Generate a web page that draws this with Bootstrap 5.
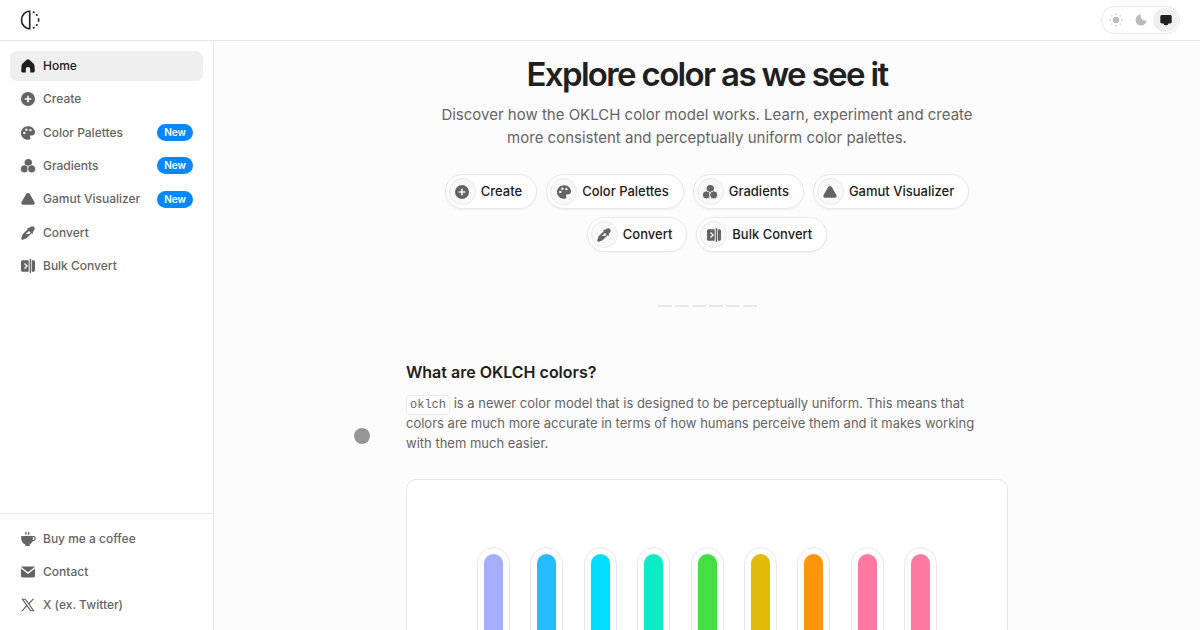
<!DOCTYPE html>
<html lang="en">
<head>
<meta charset="utf-8">
<meta name="viewport" content="width=device-width, initial-scale=1">
<title>OKLCH colors</title>
<link href="https://cdn.jsdelivr.net/npm/bootstrap@5.3.0/dist/css/bootstrap.min.css" rel="stylesheet">
<style>
  body { font-family: Inter, "Liberation Sans", sans-serif; font-size: 13px; color: #202020; background: #fcfcfc; }
  a { text-decoration: none; }
  .line { border-color: #e8e8e8 !important; }
  .icon { width: 16px; height: 16px; fill: currentColor; flex: none; }
  .topbar { height: 41px; padding: 0 20px; }
  .brand-mark { width: 20px; height: 20px; }
  .themes { padding: 1px; height: 28px; }
  .themes label { width: 25px; height: 24px; color: #bbb; }
  .themes .btn-check:checked + label { background: #efefef; color: #202020; }
  .themes .icon { width: 14px; height: 14px; }
  .sidebar { width: 214px; }
  .side-list { padding: 10px; }
  .side-main { height: 250px; }
  .side-foot { height: 117px; }
  .side-link { height: 30px; padding: 0 10px; gap: 7px; border-radius: 7px; color: #646464; font-size: 12px; font-weight: 500; }
  .side-link.active { background: #efefef; color: #202020; }
  .new-tag { background: #0588ff; color: #fff; font-size: 10px; line-height: 17px; font-weight: 600; padding: 0 7px; }
  .page { overflow-y: auto; scrollbar-width: none; }
  .hero { width: 100%; max-width: 540px; padding-top: 13px; }
  .hero h1 { font-size: 33px; line-height: 40px; font-weight: 600; letter-spacing: -0.05em; margin: 0 0 9px; }
  .hero p { font-size: 15px; line-height: 23px; color: #646464; margin: 0 0 25px; }
  .pills { gap: 8px 9px; }
  .pill { height: 35px; padding: 0 14px 0 3px; gap: 5px; font-size: 13px; font-weight: 500; color: #202020; background: #fff; box-shadow: 0 1px 2px #0000000d; }
  .pill-icon { width: 27px; height: 27px; background: #f9f9f9; color: #646464; }
  .dashes { gap: 3px; margin: 53px 0 54px; }
  .dashes span { width: 14px; height: 2px; background: #e8e8e8; }
  .article { width: 100%; max-width: 602px; }
  .article h2 { font-size: 16px; line-height: 22px; font-weight: 600; margin: 0 0 10px; }
  .article p { font-size: 13px; line-height: 20px; color: #646464; margin: 0 0 26px; padding-right: 14px; }
  .article code { font-family: "Liberation Mono", monospace; font-size: 12px; line-height: 16px; color: #646464; background: #fff; padding: 2px 3px; border-radius: 4px; }
  .chart { border-radius: 10px; padding: 67px 70px; }
  .tube { width: 33px; height: 200px; padding: 6px; }
  .dot { position: fixed; left: 354px; top: 428px; width: 16px; height: 16px; background: #969696; }
</style>
</head>
<body class="vh-100 d-flex flex-column overflow-hidden">
<svg class="d-none">
  <symbol id="home" viewBox="0 0 16 16"><path d="M8 1.200c.5 0 1 .2 1.400.6l4 3.800c.6.6.9 1.200 1 2l.4 4.700c.1 1.400-.7 2.300-1.900 2.300h-2.700V11.200c0-1.300-.9-2.100-2.200-2.100s-2.200.8-2.200 2.100v3.400H3.100c-1.200 0-2-.9-1.900-2.300l.4-4.700c.1-.8.4-1.400 1-2l4-3.800c.4-.4.9-.6 1.400-.6z"/></symbol>
  <symbol id="plus" viewBox="0 0 16 16"><path fill-rule="evenodd" d="M8 1a7 7 0 1 1 0 14A7 7 0 0 1 8 1zm-.8 3.700v2.500H4.700v1.600h2.500v2.500h1.600V8.800h2.500V7.200H8.800V4.700z"/></symbol>
  <symbol id="palette" viewBox="0 0 16 16"><path fill-rule="evenodd" d="M8 1.200c4 0 7 2.700 7 6 0 2.100-1.400 3.200-3.200 3.200h-1c-.8 0-1.100.7-.7 1.400.9 1.400.2 3-1.500 3C4 14.800 1 11.900 1 8s3.100-6.800 7-6.800zM4.300 6.700a1.200 1.200 0 1 0 0 2.400 1.200 1.200 0 0 0 0-2.400zM6.400 3.500a1.200 1.200 0 1 0 0 2.400 1.200 1.200 0 0 0 0-2.400zm4 .4a1.200 1.200 0 1 0 0 2.400 1.200 1.200 0 0 0 0-2.400z"/></symbol>
  <symbol id="circles" viewBox="0 0 16 16"><circle cx="8.300" cy="4.700" r="3.700"/><circle cx="4.400" cy="10.900" r="4" stroke="#fff" stroke-width=".8"/><circle cx="11.700" cy="10.900" r="4" stroke="#fff" stroke-width=".8"/></symbol>
  <symbol id="triangle" viewBox="0 0 16 16"><path d="M6 3.200c.9-1.500 3.100-1.500 4 0l4.400 7.900c.8 1.400 0 2.600-1.600 2.600H3.200c-1.600 0-2.400-1.200-1.600-2.600z"/></symbol>
  <symbol id="dropper" viewBox="0 0 16 16"><path fill-rule="evenodd" d="M10 2.300c1.200-1.200 2.800-1.500 4-.4s.8 2.800-.4 4l-1 1 .3.300c.8.8-.4 2-1.200 1.200l-.1-.1-4.500 4.500c-.6.6-1.100.9-1.800 1l-.9.200-.9.600c-1.400.8-2.900-.6-2.100-2l.6-1 .2-1c.1-.7.400-1.200 1-1.800l4.500-4.500-.1-.1c-.8-.8.400-2 1.200-1.200zm-1.100 3.600L5.900 8.900h3.200l1.500-1.500z"/></symbol>
  <symbol id="bulk" viewBox="0 0 16 16"><path fill-rule="evenodd" d="M2.800 2.200h5.900v11.600H2.800C1.600 13.800 1 13.200 1 12V4c0-1.200.6-1.800 1.800-1.800zm1.200 3.700L6.100 8 4 10.100l1 .9 3-3-3-3z"/><path d="M9.700 1H11v14H9.700zM11.700 2.200h1.500c1.200 0 1.800.6 1.800 1.800v8c0 1.200-.6 1.800-1.800 1.800h-1.500z"/></symbol>
  <symbol id="coffee" viewBox="0 0 16 16"><path d="M5.200.8h1.300v3H5.200zM8 .8h1.300v3H8z"/><path fill-rule="evenodd" d="M1.200 5h12.300c1.500 0 2.300.9 2.300 2.300 0 2-1.400 3.200-3.400 3.200-.6 1.300-1.500 2.300-2.700 2.900V15H5.300v-1.600C2.600 12.500 1.200 10 1.200 7zm11.600 1.300v2.900c1.100-.1 1.700-.8 1.700-1.900 0-.7-.3-1-1-1z"/></symbol>
  <symbol id="mail" viewBox="0 0 16 16"><path d="M2.200 2.500h11.600c.5 0 .8.200 1 .5L8 8.200 1.200 3c.2-.3.5-.5 1-.5z"/><path d="M1 4.600 8 10l7-5.400v7.200c0 1.200-.6 1.700-1.700 1.700H2.700C1.600 13.500 1 13 1 11.800z"/></symbol>
  <symbol id="x" viewBox="0 0 16 16"><path fill-rule="evenodd" d="M1.300 1.700h4.300l3.200 4.400 3.900-4.400h1.500L9.500 7.100l5.200 7.200h-4.300L6.900 9.400l-4.300 4.900H1.100l5.100-5.900zm2.200 1.100 7.500 10.400h1.600L5 2.800z"/></symbol>
  <symbol id="sun" viewBox="0 0 16 16"><circle cx="8" cy="8" r="3.700"/><circle cx="8" cy="1.400" r=".8"/><circle cx="8" cy="14.600" r=".8"/><circle cx="1.400" cy="8" r=".8"/><circle cx="14.600" cy="8" r=".8"/><circle cx="3.300" cy="3.300" r=".8"/><circle cx="12.700" cy="3.300" r=".8"/><circle cx="3.300" cy="12.700" r=".8"/><circle cx="12.700" cy="12.700" r=".8"/></symbol>
  <symbol id="moon" viewBox="0 0 16 16"><path d="M7.700 1.800c-1 3.600 1.600 7.100 5.500 6.700.5 0 1.100.1.900.8-.7 2.900-3 4.900-6.100 4.900-3.500 0-6.200-2.700-6.200-6.200 0-3.100 2-5.500 5-6.400.6-.2 1-.1.900.2z"/></symbol>
  <symbol id="screen" viewBox="0 0 16 16"><path d="M3.400 2.200h9.200c1.300 0 1.900.7 1.900 1.900v5.900c0 1.200-.6 1.900-1.900 1.900H3.400c-1.300 0-1.900-.7-1.900-1.900V4.100c0-1.200.6-1.900 1.900-1.900zM5.200 11.500h5.600c-.1 1.700-1 2.500-2.200 2.500H7.400c-1.200 0-2.100-.8-2.200-2.500z"/></symbol>
</svg>

<header class="topbar d-flex align-items-center justify-content-between bg-white border-bottom line flex-shrink-0">
  <a href="#" aria-label="Start page" class="d-flex text-dark">
    <svg class="brand-mark" viewBox="0 0 20 20" fill="none" stroke="#202020" stroke-width="1.600"><path d="M9.700 1v18M10.500 19A9 9 0 1 1 10.500 1"/><path d="M12.800 1.700l1.800.9M16.200 4.100l1.200 1.700M18.600 8.200v3.600M17.400 14.200l-1.200 1.700M14.600 17.400l-1.800.9"/></svg>
  </a>
  <div class="themes d-flex align-items-center border line rounded-pill" role="group" aria-label="Theme">
    <input class="btn-check" type="radio" name="theme" id="light"><label for="light" class="d-flex align-items-center justify-content-center rounded-circle" aria-label="Light"><svg class="icon"><use href="#sun"/></svg></label>
    <input class="btn-check" type="radio" name="theme" id="dark"><label for="dark" class="d-flex align-items-center justify-content-center rounded-circle" aria-label="Dark"><svg class="icon"><use href="#moon"/></svg></label>
    <input class="btn-check" type="radio" name="theme" id="system" checked><label for="system" class="d-flex align-items-center justify-content-center rounded-circle" aria-label="System"><svg class="icon"><use href="#screen"/></svg></label>
  </div>
</header>

<div class="d-flex flex-grow-1 overflow-hidden">
  <aside class="sidebar d-flex flex-column justify-content-between bg-white border-end line flex-shrink-0">
    <nav class="side-list side-main d-flex flex-column justify-content-between" aria-label="Main">
      <a href="#" class="side-link active d-flex align-items-center"><svg class="icon"><use href="#home"/></svg>Home</a>
      <a href="#" class="side-link d-flex align-items-center"><svg class="icon"><use href="#plus"/></svg>Create</a>
      <a href="#" class="side-link d-flex align-items-center"><svg class="icon"><use href="#palette"/></svg>Color Palettes<span class="new-tag rounded-pill ms-auto">New</span></a>
      <a href="#" class="side-link d-flex align-items-center"><svg class="icon"><use href="#circles"/></svg>Gradients<span class="new-tag rounded-pill ms-auto">New</span></a>
      <a href="#" class="side-link d-flex align-items-center"><svg class="icon"><use href="#triangle"/></svg>Gamut Visualizer<span class="new-tag rounded-pill ms-auto">New</span></a>
      <a href="#" class="side-link d-flex align-items-center"><svg class="icon"><use href="#dropper"/></svg>Convert</a>
      <a href="#" class="side-link d-flex align-items-center"><svg class="icon"><use href="#bulk"/></svg>Bulk Convert</a>
    </nav>
    <nav class="side-list side-foot d-flex flex-column justify-content-between border-top line" aria-label="Links">
      <a href="#" class="side-link d-flex align-items-center"><svg class="icon"><use href="#coffee"/></svg>Buy me a coffee</a>
      <a href="#" class="side-link d-flex align-items-center"><svg class="icon"><use href="#mail"/></svg>Contact</a>
      <a href="#" class="side-link d-flex align-items-center"><svg class="icon"><use href="#x"/></svg>X (ex. Twitter)</a>
    </nav>
  </aside>

  <main class="page flex-grow-1 d-flex flex-column align-items-center">
    <section class="hero text-center">
      <h1>Explore color as we see it</h1>
      <p>Discover how the OKLCH color model works. Learn, experiment and create more consistent and perceptually uniform color palettes.</p>
      <div class="pills d-flex flex-wrap justify-content-center">
        <a href="#" class="pill d-flex align-items-center border line rounded-pill"><span class="pill-icon d-flex align-items-center justify-content-center border line rounded-circle"><svg class="icon"><use href="#plus"/></svg></span>Create</a>
        <a href="#" class="pill d-flex align-items-center border line rounded-pill"><span class="pill-icon d-flex align-items-center justify-content-center border line rounded-circle"><svg class="icon"><use href="#palette"/></svg></span>Color Palettes</a>
        <a href="#" class="pill d-flex align-items-center border line rounded-pill"><span class="pill-icon d-flex align-items-center justify-content-center border line rounded-circle"><svg class="icon"><use href="#circles"/></svg></span>Gradients</a>
        <a href="#" class="pill d-flex align-items-center border line rounded-pill"><span class="pill-icon d-flex align-items-center justify-content-center border line rounded-circle"><svg class="icon"><use href="#triangle"/></svg></span>Gamut Visualizer</a>
        <a href="#" class="pill d-flex align-items-center border line rounded-pill"><span class="pill-icon d-flex align-items-center justify-content-center border line rounded-circle"><svg class="icon"><use href="#dropper"/></svg></span>Convert</a>
        <a href="#" class="pill d-flex align-items-center border line rounded-pill"><span class="pill-icon d-flex align-items-center justify-content-center border line rounded-circle"><svg class="icon"><use href="#bulk"/></svg></span>Bulk Convert</a>
      </div>
    </section>

    <div class="dashes d-flex" aria-hidden="true"><span></span><span></span><span></span><span></span><span></span><span></span></div>

    <section class="article">
      <h2>What are OKLCH colors?</h2>
      <p><code class="border line">oklch</code> is a newer color model that is designed to be perceptually uniform. This means that colors are much more accurate in terms of how humans perceive them and it makes working with them much easier.</p>
      <div class="chart d-flex justify-content-between bg-white border line">
        <div class="tube border line rounded-pill"><div class="h-100 rounded-pill" style="background:#a5adff"></div></div>
        <div class="tube border line rounded-pill"><div class="h-100 rounded-pill" style="background:#24bcff"></div></div>
        <div class="tube border line rounded-pill"><div class="h-100 rounded-pill" style="background:#00ddff"></div></div>
        <div class="tube border line rounded-pill"><div class="h-100 rounded-pill" style="background:#0debc5"></div></div>
        <div class="tube border line rounded-pill"><div class="h-100 rounded-pill" style="background:#43df43"></div></div>
        <div class="tube border line rounded-pill"><div class="h-100 rounded-pill" style="background:#e2bc09"></div></div>
        <div class="tube border line rounded-pill"><div class="h-100 rounded-pill" style="background:#ff9509"></div></div>
        <div class="tube border line rounded-pill"><div class="h-100 rounded-pill" style="background:#ff7aa2"></div></div>
        <div class="tube border line rounded-pill"><div class="h-100 rounded-pill" style="background:#ff7aa2"></div></div>
      </div>
    </section>
  </main>
</div>
<div class="dot rounded-circle" aria-hidden="true"></div>
<script src="https://cdn.jsdelivr.net/npm/bootstrap@5.3.0/dist/js/bootstrap.bundle.min.js"></script>
</body>
</html>
